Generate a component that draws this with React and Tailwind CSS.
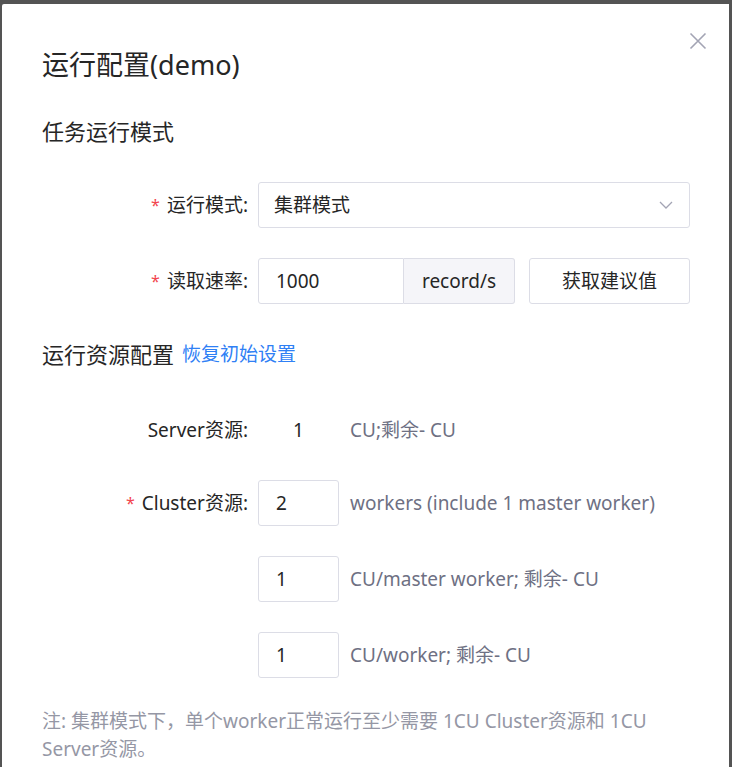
import React from "react";

const FONT = { fontFamily: '"Noto Sans", "Noto Sans CJK SC", sans-serif' };

const Label = ({ required, children }) => (
  <div className="w-[216px] shrink-0 pr-[10px] text-right text-[19px] text-[#262626] flex items-center justify-end">
    {required && <span className="text-[#f2454f] mr-[7px] text-[16px]">*</span>}
    <span>{children}:</span>
  </div>
);

const Hint = ({ children }) => (
  <span className="ml-[11px] text-[19px] text-[#6e7083] whitespace-nowrap">{children}</span>
);

const SmallInput = ({ value }) => (
  <div className="w-[81px] h-[46px] border border-[#dcdde6] rounded-[3px] flex items-center pl-[17px] text-[19px] text-[#262626]">
    {value}
  </div>
);

const App = () => {
  return (
    <div className="w-[732px] h-[767px] bg-[#545454] pt-[4px] pl-[2px] pr-[3px] overflow-hidden" style={FONT}>
      <div className="relative h-full bg-white rounded-tl-[2px] pl-[40px] pr-[39px] pt-[43px]">
        {/* close */}
        <button className="absolute right-[20px] top-[26px] w-[22px] h-[22px] flex items-center justify-center">
          <svg width="18" height="18" viewBox="0 0 18 18" fill="none" stroke="#a3a4b4" strokeWidth="1.6">
            <path d="M1.5 1.5L16.5 16.5M16.5 1.5L1.5 16.5" />
          </svg>
        </button>

        <h2 className="text-[27px] leading-[36px] text-[#262626]">运行配置(demo)</h2>

        <h3 className="mt-[33px] text-[22px] leading-[30px] text-[#262626]">任务运行模式</h3>

        {/* run mode */}
        <div className="mt-[36px] flex h-[46px]">
          <Label required>运行模式</Label>
          <div className="flex-1 border border-[#dcdde6] rounded-[3px] flex items-center justify-between pl-[15px] pr-[16px] text-[19px] text-[#262626]">
            <span>集群模式</span>
            <svg width="14" height="8" viewBox="0 0 14 8" fill="none" stroke="#a3a4b4" strokeWidth="1.3">
              <path d="M1 1L7 7L13 1" />
            </svg>
          </div>
        </div>

        {/* read rate */}
        <div className="mt-[30px] flex h-[46px]">
          <Label required>读取速率</Label>
          <div className="flex flex-1">
            <div className="w-[146px] border border-[#dcdde6] rounded-l-[3px] flex items-center pl-[17px] text-[19px] text-[#262626]">
              1000
            </div>
            <div className="w-[111px] border border-l-0 border-[#dcdde6] rounded-r-[3px] bg-[#f5f5f9] flex items-center justify-center text-[19px] text-[#262626]">
              record/s
            </div>
            <button className="ml-[14px] flex-1 border border-[#dcdde6] rounded-[3px] text-[19px] text-[#262626]">
              获取建议值
            </button>
          </div>
        </div>

        <div className="mt-[35px] flex items-center text-[22px] leading-[30px]">
          <span className="text-[#262626]">运行资源配置</span>
          <span className="ml-[8px] text-[19px] text-[#2f80f5]">恢复初始设置</span>
        </div>

        {/* server */}
        <div className="mt-[38px] flex h-[46px] items-center">
          <Label>Server资源</Label>
          <div className="w-[81px] text-center text-[19px] text-[#262626]">1</div>
          <Hint>CU;剩余- CU</Hint>
        </div>

        {/* cluster */}
        <div className="mt-[27px] flex h-[46px] items-center">
          <Label required>Cluster资源</Label>
          <SmallInput value="2" />
          <Hint>workers (include 1 master worker)</Hint>
        </div>

        <div className="mt-[30px] flex h-[46px] items-center">
          <div className="w-[216px] shrink-0" />
          <SmallInput value="1" />
          <Hint>CU/master worker; 剩余- CU</Hint>
        </div>

        <div className="mt-[30px] flex h-[46px] items-center">
          <div className="w-[216px] shrink-0" />
          <SmallInput value="1" />
          <Hint>CU/worker; 剩余- CU</Hint>
        </div>

        <p className="mt-[29px] text-[19px] leading-[28px] text-[#9597a5] whitespace-nowrap">
          注: 集群模式下，单个worker正常运行至少需要 1CU Cluster资源和 1CU
          <br />
          Server资源。
        </p>
      </div>
    </div>
  );
};

export default App;
